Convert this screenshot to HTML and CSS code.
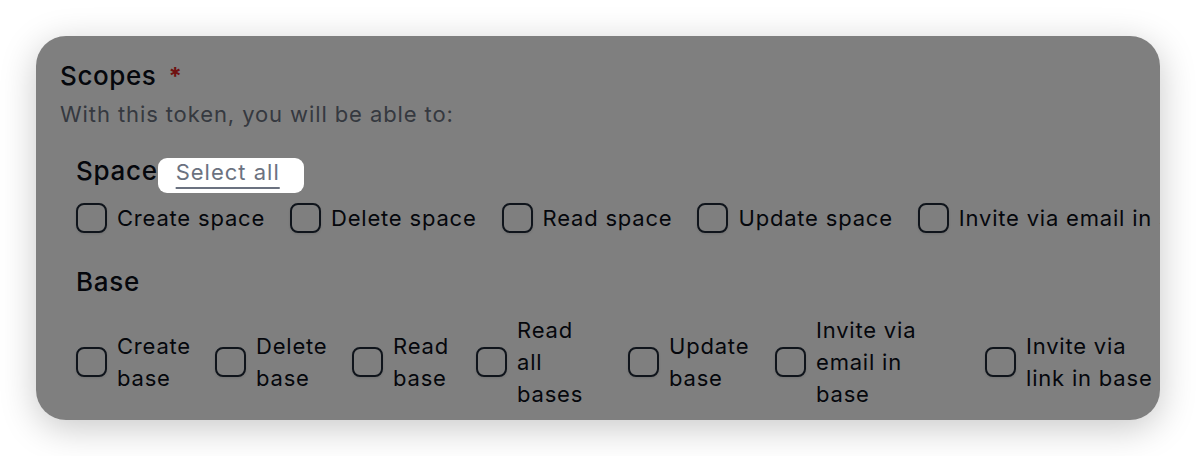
FILE: index.html
```html
<!DOCTYPE html>
<html lang="en">
<head>
<meta charset="utf-8">
<title>Scopes</title>
<link rel="stylesheet" href="styles.css">
</head>
<body>
  <div class="card">
    <div class="field-head">
      <span class="field-title">Scopes</span>
      <span class="required">*</span>
    </div>
    <p class="field-hint">With this token, you will be able to:</p>

    <section class="scope-group">
      <div class="group-head group-head-space">
        <h3 class="group-title">Space</h3>
        <span class="spotlight"><a class="select-all" href="#">Select all</a></span>
      </div>
      <div class="options options-row">
        <label class="option"><span class="box"></span><span class="option-text">Create space</span></label>
        <label class="option"><span class="box"></span><span class="option-text">Delete space</span></label>
        <label class="option"><span class="box"></span><span class="option-text">Read space</span></label>
        <label class="option"><span class="box"></span><span class="option-text">Update space</span></label>
        <label class="option"><span class="box"></span><span class="option-text">Invite via email in space</span></label>
        <label class="option"><span class="box"></span><span class="option-text">Invite via link in space</span></label>
      </div>
    </section>

    <section class="scope-group">
      <div class="group-head group-head-base">
        <h3 class="group-title">Base</h3>
      </div>
      <div class="options options-grid">
        <label class="option"><span class="box"></span><span class="option-text">Create base</span></label>
        <label class="option"><span class="box"></span><span class="option-text">Delete base</span></label>
        <label class="option"><span class="box"></span><span class="option-text">Read base</span></label>
        <label class="option opt-narrow"><span class="box"></span><span class="option-text">Read all bases</span></label>
        <label class="option"><span class="box"></span><span class="option-text">Update base</span></label>
        <label class="option opt-email"><span class="box"></span><span class="option-text">Invite via email in base</span></label>
        <label class="option"><span class="box"></span><span class="option-text">Invite via link in base</span></label>
      </div>
    </section>

    <div class="dim"></div>
  </div>
</body>
</html>
```

FILE: styles.css
```css
* {
  box-sizing: border-box;
}

html, body {
  margin: 0;
  padding: 0;
  background: #ffffff;
}

body {
  font-family: Inter, "Noto Sans", "Liberation Sans", sans-serif;
  color: #0b0f19;
  padding: 36px;
  width: 1196px;
  height: 456px;
  overflow: hidden;
}

.card {
  position: relative;
  width: 1124px;
  height: 384px;
  background: #ffffff;
  border-radius: 30px;
  box-shadow: 0 8px 36px rgba(0, 0, 0, 0.22);
  padding: 24px 24px 0 24px;
  overflow: hidden;
}

/* dark backdrop laid over the whole card */
.dim {
  position: absolute;
  inset: 0;
  background: rgba(0, 0, 0, 0.5);
  z-index: 1;
  pointer-events: none;
}

.field-head {
  display: flex;
  align-items: baseline;
  gap: 12px;
  line-height: 32px;
}

.field-title {
  font-size: 26px;
  font-weight: 500;
  letter-spacing: 0.6px;
}

.required {
  color: #e02424;
  font-size: 24px;
  font-weight: 700;
}

.field-hint {
  margin: 7px 0 0 0;
  font-size: 22px;
  line-height: 28px;
  letter-spacing: 0.9px;
  color: #6b7280;
}

.scope-group {
  padding-left: 16px;
}

.group-head {
  display: flex;
  align-items: flex-start;
}

.group-head-space {
  height: 35px;
  margin-top: 30px;
}

.group-head-base {
  height: 32px;
  margin-top: 35px;
}

.group-title {
  margin: 0;
  font-size: 26px;
  line-height: 26px;
  font-weight: 500;
  letter-spacing: 0.7px;
}

/* highlighted control sits above the backdrop */
.spotlight {
  position: relative;
  z-index: 2;
  display: flex;
  align-items: flex-start;
  align-self: stretch;
  padding: 0 24px 0 18px;
  background: #ffffff;
  border-radius: 9px;
}

.select-all {
  font-size: 22px;
  line-height: 28px;
  letter-spacing: 1px;
  color: #6b7280;
  text-decoration: underline;
  text-decoration-thickness: 2px;
  text-underline-offset: 7px;
}

.options {
  font-size: 22px;
  line-height: 32px;
  letter-spacing: 0.8px;
}

.options-row {
  display: flex;
  gap: 25px;
  margin-top: 9px;
  white-space: nowrap;
}

.options-grid {
  display: grid;
  grid-template-columns: 114px 112px 99px 127px 122px 185px 170px;
  column-gap: 25px;
  align-items: center;
  margin-top: 13px;
}

.option {
  display: flex;
  align-items: center;
  gap: 10px;
}

.box {
  flex: none;
  width: 31px;
  height: 30px;
  border: 2px solid #1f2937;
  border-radius: 8px;
  background: #ffffff;
  box-shadow: 0 1px 3px rgba(0, 0, 0, 0.12);
}

.options-grid .option-text {
  min-width: 0;
}

.opt-narrow .option-text {
  max-width: 72px;
}

.opt-email .option-text {
  max-width: 132px;
}
```
